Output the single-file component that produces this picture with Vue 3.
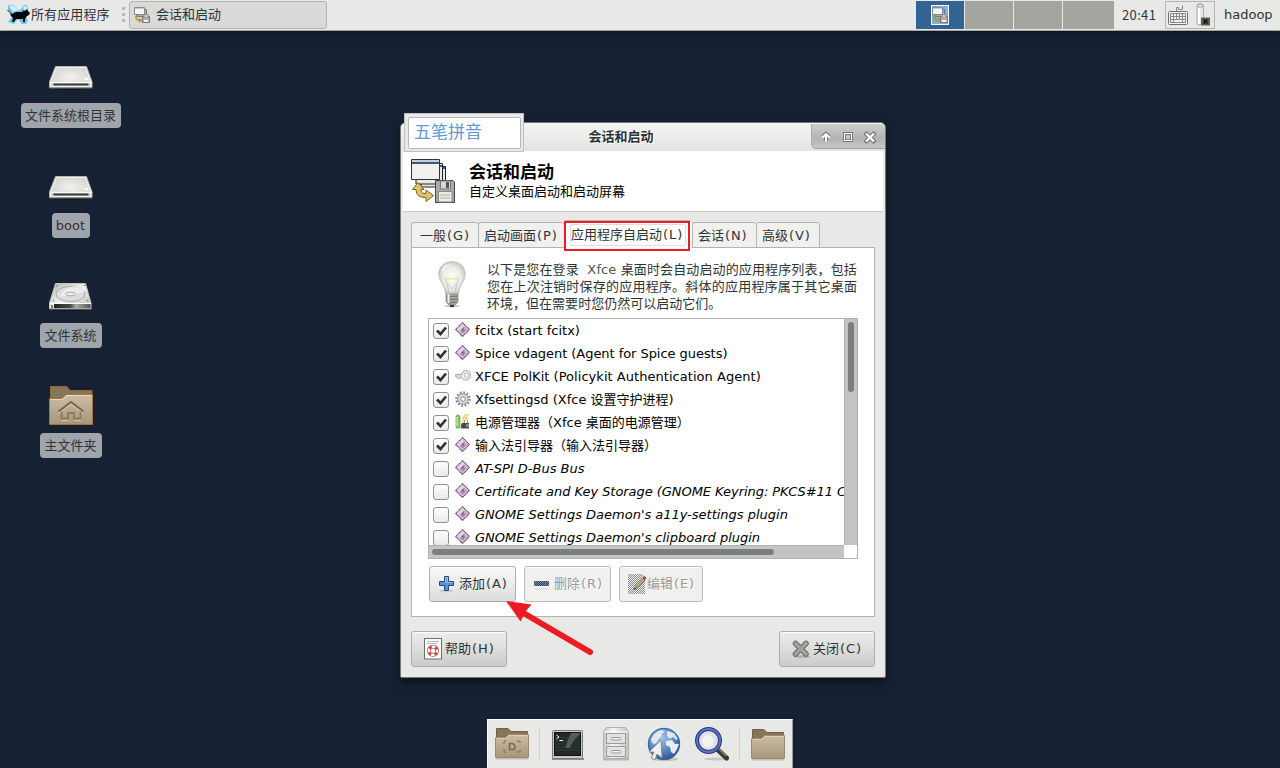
<script setup>
const desktopItems = [
  { icon: 'drive', label: '文件系统根目录' },
  { icon: 'drive', label: 'boot', latin: true },
  { icon: 'disk', label: '文件系统' },
  { icon: 'home', label: '主文件夹' },
]

const tabs = [
  { name: '一般', key: '(G)', cls: 't1' },
  { name: '启动画面', key: '(P)', cls: 't2' },
  { name: '应用程序自启动', key: '(L)', cls: 't3 active' },
  { name: '会话', key: '(N)', cls: 't4' },
  { name: '高级', key: '(V)', cls: 't5' },
]

const entries = [
  { on: true, icon: 'launcher', text: 'fcitx (start fcitx)' },
  { on: true, icon: 'launcher', text: 'Spice vdagent (Agent for Spice guests)', cls: 'tight' },
  { on: true, icon: 'key', text: 'XFCE PolKit (Policykit Authentication Agent)', cls: 'loose' },
  { on: true, icon: 'gear', text: 'Xfsettingsd (Xfce 设置守护进程)' },
  { on: true, icon: 'power', text: '电源管理器（Xfce 桌面的电源管理）' },
  { on: true, icon: 'launcher', text: '输入法引导器（输入法引导器）' },
  { on: false, icon: 'launcher', text: 'AT-SPI D-Bus Bus' },
  { on: false, icon: 'launcher', text: 'Certificate and Key Storage (GNOME Keyring: PKCS#11 C', cls: 'tight' },
  { on: false, icon: 'launcher', text: "GNOME Settings Daemon's a11y-settings plugin" },
  { on: false, icon: 'launcher', text: "GNOME Settings Daemon's clipboard plugin" },
]
</script>

<template>
  <div class="desktop">
    <svg class="defs" width="0" height="0">
      <defs>
        <linearGradient id="gFolder" x1="0" y1="0" x2="0" y2="1">
          <stop offset="0" stop-color="#cbbda6" /><stop offset="1" stop-color="#a8967a" />
        </linearGradient>
        <radialGradient id="gMetal" cx=".5" cy=".5" r=".6">
          <stop offset="0" stop-color="#f2f2f1" /><stop offset="1" stop-color="#cfcfcc" />
        </radialGradient>
        <linearGradient id="gDisk" x1="0" y1="0" x2="1" y2="1">
          <stop offset="0" stop-color="#b5b6b5" /><stop offset=".5" stop-color="#f0f0f0" /><stop offset="1" stop-color="#b9bab9" />
        </linearGradient>
        <linearGradient id="gFront" x1="0" y1="0" x2="1" y2="0">
          <stop offset="0" stop-color="#222" /><stop offset=".45" stop-color="#4a4a4a" /><stop offset=".6" stop-color="#aaa" /><stop offset="1" stop-color="#555" />
        </linearGradient>
        <linearGradient id="gCabinet" x1="0" y1="0" x2="1" y2="0">
          <stop offset="0" stop-color="#c9cac7" /><stop offset=".4" stop-color="#f4f4f2" /><stop offset="1" stop-color="#c4c5c1" />
        </linearGradient>
        <radialGradient id="gGlobe" cx=".4" cy=".3" r=".8">
          <stop offset="0" stop-color="#a9c6e8" /><stop offset=".55" stop-color="#5584bd" /><stop offset="1" stop-color="#204a87" />
        </radialGradient>
        <linearGradient id="gApp" x1="0" y1="0" x2="1" y2="1">
          <stop offset="0" stop-color="#efe6f0" /><stop offset="1" stop-color="#a57fae" />
        </linearGradient>
        <radialGradient id="gBulb">
          <stop offset="0" stop-color="#fdfdf8" /><stop offset=".65" stop-color="#ededeb" /><stop offset="1" stop-color="#cbcbc8" />
        </radialGradient>
        <pattern id="pDots" width="2" height="2" patternUnits="userSpaceOnUse">
          <rect width="1" height="1" fill="#8c8e8c" /><rect x="1" y="1" width="1" height="1" fill="#8c8e8c" />
        </pattern>
        <pattern id="pBlue" width="2" height="2" patternUnits="userSpaceOnUse">
          <rect width="2" height="2" fill="#7d8895" /><rect width="1" height="1" fill="#2f4260" /><rect x="1" y="1" width="1" height="1" fill="#2f4260" />
        </pattern>
        <symbol id="session" viewBox="0 0 44 44">
          <path d="M10 7.500H34.500V28H10Z" fill="#e8e8e7" stroke="#222" />
          <path d="M5 4.500H31.500V25H5Z" fill="#e8e8e7" stroke="#222" />
          <path d="M.500 .500H28.500V20.500H.500Z" fill="#f0f0ef" stroke="#333" />
          <path d="M1 1H28V3H1Z" fill="#c9cdd2" /><path d="M1 3H28V5H1Z" fill="#38587c" /><path d="M29 6H31V8H29ZM32 8H34V10H32Z" fill="#38587c" />
          <path d="M7 23.500L1.500 30.500H5Q5 39 15 38.500V42.500L22.500 36.500L15 31V34.500Q10 35 10 30.500H13Z" fill="#dfc36d" stroke="#79641f" />
          <path d="M24.500 21.500H42L43.500 23V43.500H24.500Z" fill="#a8a9a8" stroke="#444" />
          <path d="M29.500 22H39.500V30H29.500Z" fill="#d6d6d5" stroke="#777" />
          <path d="M35 23H38V29H35Z" fill="#555" /><path d="M27.500 32.500H41V43H27.500Z" fill="#ececeb" stroke="#888" />
          <path d="M29 36H39M29 39H39" stroke="#aaa" />
        </symbol>
        <symbol id="sessionSmall" viewBox="0 0 16 16">
          <path d="M2.500 2.500H12.500V9.500H2.500Z" fill="#aaa" stroke="#777" />
          <path d="M.500 .500H10.500V7.500H.500Z" fill="#f4f4f3" stroke="#888" /><path d="M1 1.500H10" stroke="#c3ccd6" />
          <path d="M2 9L2 11Q3 13.500 6 13.500M5 11.500L7.500 13.500L5 15" fill="none" stroke="#b79738" stroke-width="1.600" />
          <path d="M8.500 9.500H15.500V15.500H8.500Z" fill="#b5b5b4" stroke="#777" /><path d="M10 7.500H14V11H10Z" fill="#ccc" stroke="#888" stroke-width=".8" /><path d="M10 13H14V15H10Z" fill="#eee" />
        </symbol>
        <symbol id="drive" viewBox="0 0 48 48">
          <ellipse cx="24" cy="33" rx="22" ry="2" fill="#0b1119" opacity=".6" />
          <path d="M8.500 11.500H39.500L45 27V32.500H2.500V27Z" fill="url(#gMetal)" stroke="#b4b5ab" />
          <path d="M9.500 12.500H38.500L44 26.500V31.500H3.500V26.500Z" fill="none" stroke="#fafaf9" stroke-width=".8" />
          <path d="M3 27.300H45" stroke="#fff" /><path d="M6.500 29.500H41.500" stroke="#3a3a3a" stroke-width="1.800" />
          <path d="M2.500 33H45.500" stroke="#77776e" /><ellipse cx="39.500" cy="24" rx="2.500" ry="1.300" fill="#f8f8f8" />
        </symbol>
        <symbol id="disk" viewBox="0 0 48 48">
          <ellipse cx="24" cy="34" rx="21" ry="2" fill="#0b1119" opacity=".6" />
          <path d="M8.500 8.500H38.500L44 28V33.500H2.500V28Z" fill="url(#gDisk)" stroke="#c4c5c1" />
          <path d="M3 28.500H44" stroke="#fff" /><path d="M7 29H43.500V33H7Z" fill="url(#gFront)" /><path d="M4 30H6V33H4Z" fill="#777" />
          <path d="M2.500 34H44.500" stroke="#8a8a86" />
          <ellipse cx="23.500" cy="19" rx="14.500" ry="7.500" fill="#dcdddc" stroke="#9a9b9a" stroke-width=".8" />
          <path d="M13 22Q16 12 31 11Q38 14 37 17Z" fill="#f4f4f4" opacity=".7" /><ellipse cx="23.500" cy="19" rx="5" ry="1.800" fill="#eee" stroke="#aaa" />
          <circle cx="9.500" cy="11" r=".8" fill="#777" /><circle cx="37.500" cy="10.500" r=".8" fill="#777" /><circle cx="40.500" cy="25.500" r=".8" fill="#777" /><circle cx="6.500" cy="25.500" r=".8" fill="#777" />
        </symbol>
        <symbol id="home" viewBox="0 0 48 48">
          <path d="M3.500 39V1.500H20L23 5.500H45V12H42V38Z" fill="#86745b" stroke="#96662a" />
          <path d="M2.500 13.500H15L19 9.500H45.500V39.500H2.500Z" fill="url(#gFolder)" stroke="#a87434" />
          <path d="M3.500 14.500H15.500L19.500 10.500H44.500" fill="none" stroke="#e3dac9" />
          <path d="M11.500 26.500L24 17L36.500 26.500" fill="none" stroke="#78664b" stroke-width="2" />
          <path d="M14.500 26V33.500H21V28H27V33.500H33.500V26" fill="none" stroke="#8d7a5c" stroke-width="1.800" />
          <path d="M14 35.500H21M27 35.500H34M11.500 28.500L24 19L36.500 28.500" fill="none" stroke="#ddd2bd" stroke-width=".8" />
        </symbol>
        <symbol id="folder" viewBox="0 0 34 34">
          <path d="M1 32.500H33" stroke="#99958d" stroke-width="2" opacity=".5" />
          <path d="M1.500 30V2.500H13L16 5.500H32.500V12Z" fill="#86745b" stroke="#73603f" />
          <path d="M.500 11.500H10.500L13.500 8.500H33.500V31.500H.500Z" fill="url(#gFolder)" stroke="#a08a6b" />
          <path d="M1.500 12.500H11L14 9.500H32.500" fill="none" stroke="#d9cfbd" />
        </symbol>
        <symbol id="launcher" viewBox="0 0 16 16">
          <path d="M7.500 .700L14.500 7.500L7.500 14.500L.700 7.500Z" fill="url(#gApp)" stroke="#664070" stroke-width="1.100" stroke-dasharray="1.500 .500" />
          <path d="M7.500 2.200L13 7.500L7.500 13L2.200 7.500Z" fill="none" stroke="#e6dae8" stroke-width=".8" />
          <path d="M4 7L7.500 3.500L9 5L5.500 8.500Z" fill="#f4edf5" opacity=".7" /><path d="M5.500 10L9.500 5M8 5.500V10.500M6 7L10 8.500" stroke="#7d5389" stroke-width=".8" />
        </symbol>
        <symbol id="key" viewBox="0 0 16 16">
          <path d="M10.500 2.500C14 2.500 15.500 4.500 15.500 7S14 12 11 12C8.500 12 7.500 11 7 9.500L3 10.500L.700 8.500V6.500H7C7 4 8.500 2.500 10.500 2.500Z" fill="#eee" stroke="#a5a5a5" />
          <ellipse cx="11.500" cy="7.200" rx="2" ry="2.200" fill="#fff" stroke="#b5b5b5" /><path d="M1 8H7" stroke="#aaa" stroke-width=".7" />
        </symbol>
        <symbol id="gear" viewBox="0 0 16 16">
          <circle cx="8" cy="8" r="6.600" fill="none" stroke="#858585" stroke-width="2.200" stroke-dasharray="1.730 1.730" />
          <circle cx="8" cy="8" r="5.200" fill="#dedede" stroke="#888" stroke-width=".9" />
          <circle cx="8" cy="8" r="2.300" fill="#fff" stroke="#888" />
        </symbol>
        <symbol id="power" viewBox="0 0 16 16">
          <path d="M2 1H4V2H5V14H1V2H2Z" fill="#8bc66a" stroke="#63a33e" stroke-width=".7" />
          <path d="M2 3V12" stroke="#d2efc0" /><path d="M10 0L7 5H9L7 9L13 4H11L14 0Z" fill="#f7dd91" stroke="#e9bd5a" stroke-width=".5" />
          <path d="M7 9H14V14.500H6V11Z" fill="#444b4b" /><path d="M9 6H10V9H9ZM12 6H13V9H12Z" fill="#999" /><path d="M11 10H14V13H11Z" fill="#888" />
        </symbol>
      </defs>
    </svg>

    <header class="panel">
      <div class="menu">
        <svg class="mouse" width="24" height="20" viewBox="0 0 24 20">
          <path d="M1 .500L7 0L12 6L17 0H20L21 5L16 10L21 15L19 19H15L11 14L7 19L1 17L7 10L1 5Z" fill="#6cc3e8" />
          <path d="M2 1L7 .500L11 5L6 7ZM16 2L19 .500L20 4L17 6Z" fill="#d3effa" />
          <path d="M5 9L9 7H15L17 5L18 6L20 4L21 6L23 8L22 10L20 11L18 14V17H16V14H9L7 17H5L6 13L4 11L3 8L0 5L1 5L4 8Z" fill="#020202" />
        </svg>
        <span>所有应用程序</span>
      </div>
      <i class="grip"></i>
      <div class="task">
        <svg width="16" height="16"><use href="#sessionSmall" /></svg>
        <span>会话和启动</span>
      </div>
      <div class="pager">
        <i class="ws current"><b><svg width="16" height="18"><use href="#sessionSmall" /></svg></b></i><i class="ws"></i><i class="ws"></i><i class="ws last"></i>
      </div>
      <span class="clock">20:41</span>
      <div class="tray">
        <svg width="20" height="20" viewBox="0 0 20 20" fill="none" stroke="#6f6f6f">
          <path d="M8.500 6V2.500H10.500V4.500H14.500V.500" stroke="#888" />
          <rect x=".500" y="6.500" width="19" height="13" rx="1" fill="#f2f2f1" />
          <path d="M2.500 8.500H17.500V17.500H2.500ZM2.500 11.500H17.500M2.500 14.500H17.500M5.500 8.500V17.500M8.500 8.500V14.500M11.500 8.500V14.500M14.500 8.500V17.500" stroke="#888" />
        </svg>
        <svg width="14" height="23" viewBox="0 0 14 23">
          <path d="M1 3Q1 .500 4 .500T7.500 3V20Q7.500 22 4 22T1 20Z" fill="#e8e8e7" stroke="#aaa" /><path d="M3 2V21" stroke="#fff" stroke-width="2" />
          <ellipse cx="4.200" cy="3" rx="3" ry="1.300" fill="#eee" stroke="#aaa" />
          <rect x="5" y="14.500" width="9" height="8" fill="#5b6057" /><path d="M7.500 16.500L11.500 20.500M11.500 16.500L7.500 20.500" stroke="#1c1f1a" stroke-width="1.800" />
        </svg>
      </div>
      <span class="user">hadoop</span>
    </header>

    <ul class="icons">
      <li v-for="(d, i) in desktopItems" :key="i">
        <svg width="48" height="48"><use :href="'#' + d.icon" /></svg>
        <span :class="{ latin: d.latin }">{{ d.label }}</span>
      </li>
    </ul>

    <section class="window">
      <div class="titlebar">
        <h1>会话和启动</h1>
        <div class="controls">
          <svg width="73" height="24" viewBox="0 0 73 24">
            <g fill="none" stroke="#777" stroke-width="4.400" stroke-linejoin="round"><path d="M14 17V11M11 13L14 10L17 13" /><path d="M54.500 10L61.500 17M61.500 10L54.500 17" stroke-linecap="square" /></g>
            <g fill="none" stroke="#fff" stroke-width="2"><path d="M14 17.500V11M10.200 13.800L14 10.200L17.800 13.800" /><path d="M54 9.500L62 17.500M62 9.500L54 17.500" stroke-width="2.400" /></g>
            <rect x="31.500" y="8.500" width="9" height="9" fill="#fff" stroke="#777" /><rect x="33.500" y="10.500" width="5" height="5" fill="#c5c5c3" stroke="#777" />
          </svg>
        </div>
      </div>
      <div class="heading">
        <svg width="44" height="44"><use href="#session" /></svg>
        <div><h2>会话和启动</h2><p>自定义桌面启动和启动屏幕</p></div>
      </div>
      <div class="body">
        <nav class="tabs">
          <div v-for="t in tabs" :key="t.key" class="tab" :class="t.cls"><span>{{ t.name }}<em>{{ t.key }}</em></span></div>
        </nav>
        <div class="page">
          <div class="intro">
            <svg width="28" height="47" viewBox="0 0 28 47">
              <ellipse cx="14" cy="45" rx="8" ry="1.500" fill="#bbb" opacity=".7" />
              <path d="M14 .700C6 .700 .800 6 .800 13C.800 20 7 24 7.500 33H20.500C21 24 27.200 20 27.200 13C27.200 6 22 .700 14 .700Z" fill="url(#gBulb)" stroke="#c0c0bc" />
              <path d="M11.500 33L7.500 17M16.500 33L20.500 17M10 23L14 28L18 23" fill="none" stroke="#c0c0ba" stroke-width=".9" />
              <path d="M7 16.500Q10 18.500 14 18T20.500 16.500" fill="none" stroke="#f2e386" stroke-width="1.400" />
              <path d="M5 13Q5 5 13 3Q6 3 4 9Z" fill="#fff" />
              <path d="M8 33H20V41L17 44H11L8 41Z" fill="#a5a5a1" stroke="#888" stroke-width=".7" /><path d="M8 36L20 35M8 39L20 38M9 42L19 41" stroke="#777" /><path d="M10.500 33V42" stroke="#eee" stroke-width="2" />
              <path d="M12 44H16V46H12Z" fill="#333" />
            </svg>
            <p><span class="l1">以下是您在登录&nbsp; <em>Xfce</em> 桌面时会自动启动的应用程序列表，包括</span><span class="l2">您在上次注销时保存的应用程序。斜体的应用程序属于其它桌面</span><span class="l3">环境，但在需要时您仍然可以启动它们。</span></p>
          </div>
          <div class="list">
            <div class="rows">
              <div v-for="(e, i) in entries" :key="i" class="row" :class="{ off: !e.on }">
                <i class="check"><svg v-if="e.on" width="14" height="14" viewBox="0 0 14 14"><path d="M3 6.500L6.500 10L12 3.500" fill="none" stroke="#2e3436" stroke-width="2.700" /></svg></i>
                <svg class="ico" width="16" height="16"><use :href="'#' + e.icon" /></svg>
                <span :class="e.cls">{{ e.text }}</span>
              </div>
            </div>
            <div class="vbar"><i></i></div>
            <div class="hbar"><i></i></div>
            <div class="corner"></div>
          </div>
          <div class="actions">
            <button class="add">
              <svg width="18" height="18" viewBox="0 0 18 18"><ellipse cx="8.500" cy="16" rx="7" ry="1.500" fill="#bbb" opacity=".6" /><path d="M6.500 1.500H10.500V6.500H15.500V10.500H10.500V15.500H6.500V10.500H1.500V6.500H6.500Z" fill="#5d90ce" stroke="#204a87" /><path d="M7.500 8V2.500H9.500V7.500H14.500" fill="none" stroke="#a4c3e8" /></svg>
              <span>添加<em>(A)</em></span>
            </button>
            <button class="off del">
              <svg width="18" height="20" viewBox="0 0 18 20"><rect x="1" y="7" width="15" height="5" rx="1" fill="url(#pBlue)" /><rect x="2" y="14" width="13" height="2" fill="url(#pDots)" opacity=".3" /></svg>
              <span>删除<em>(R)</em></span>
            </button>
            <button class="off edit">
              <svg width="20" height="20" viewBox="0 0 20 20"><path d="M1 0H15L18 4V20H1Z" fill="#ededec" /><path d="M1 0H15L18 4V20H1Z" fill="url(#pDots)" /><path d="M7 15.500L8.500 12L16 4.500L18 6L10 14Z" fill="#cbab7b" stroke="#6d604c" stroke-width=".8" /><path d="M15.500 4L17.500 2L19.500 4L18 6Z" fill="#9c4654" /><path d="M6.500 16L7.500 14L9 15Z" fill="#333" /></svg>
              <span>编辑<em>(E)</em></span>
            </button>
          </div>
        </div>
        <footer class="bottom">
          <button class="help">
            <svg width="18" height="22" viewBox="0 0 18 22"><rect x=".500" y=".500" width="17" height="20.500" fill="#fafafa" stroke="#6e706d" /><path d="M3 3.500H15M3 5.500H13" stroke="#bbb" /><circle cx="9" cy="12.800" r="4.200" fill="none" stroke="#b06a6a" stroke-width="3.800" /><circle cx="9" cy="12.800" r="4.200" fill="none" stroke="#fff" stroke-width="2.400" /><circle cx="9" cy="12.800" r="4.200" fill="none" stroke="#d94141" stroke-width="2.800" stroke-dasharray="3 3.597" stroke-dashoffset="-1.800" /></svg>
            <span>帮助<em>(H)</em></span>
          </button>
          <button class="close">
            <svg width="18" height="18" viewBox="0 0 18 18"><ellipse cx="10" cy="16.500" rx="8" ry="1.300" fill="#aaa" /><path d="M3.500 3.500L14 14M14 3.500L3.500 14" stroke="#666864" stroke-width="5.500" stroke-linecap="round" /><path d="M3.500 3.500L14 14M14 3.500L3.500 14" stroke="#a0a29f" stroke-width="3.700" stroke-linecap="round" /></svg>
            <span>关闭<em>(C)</em></span>
          </button>
        </footer>
      </div>
    </section>

    <div class="ime"><div>五笔拼音</div></div>
    <i class="mark"></i>
    <svg class="arrow" width="92" height="60" viewBox="0 0 92 60"><path d="M18 12L88 53" stroke="#ed1c24" stroke-width="6" stroke-linecap="round" /><path d="M4 2L29.500 5.500L24 12L18.500 22.500Z" fill="#ed1c24" /></svg>

    <nav class="dock">
      <svg width="34" height="34" viewBox="0 0 34 34"><use href="#folder" y="-1" /><path d="M9 17V14H12M22 14H25V17M9 22V25H12M22 25H25V22" fill="none" stroke="#8b795d" stroke-width="1.500" stroke-dasharray="2 1" /><path d="M14.500 16.500H17Q20 17 20 20T17 22.500H14.500Z" fill="none" stroke="#7b6b51" stroke-width="1.600" /></svg>
      <i></i>
      <svg width="34" height="34" viewBox="0 0 34 34"><path d="M1 32H33" stroke="#777" stroke-width="2" opacity=".8" /><rect x="1.500" y="3.500" width="30" height="28" rx="1" fill="#c9cac7" stroke="#777975" /><rect x="3.500" y="5.500" width="26" height="23" fill="#202928" stroke="#111" /><path d="M20 6H29V7Q22 13 19 21H14Q17 12 20 6Z" fill="#8b9794" opacity=".5" /><path d="M4 11H29M4 14H29M4 17H29M4 20H29M4 23H29" stroke="#455350" opacity=".5" /><path d="M5.500 8L8 10L5.500 12M8.500 13.500H12" fill="none" stroke="#fff" /></svg>
      <svg width="34" height="34" viewBox="0 0 34 34"><path d="M4 32.500H30" stroke="#888" stroke-width="2" opacity=".5" /><path d="M7.500 .500H26.500L29.500 4.500V31.500H4.500V4.500Z" fill="url(#gCabinet)" stroke="#b0b1ad" /><path d="M5 5H29" stroke="#fff" /><g fill="#e2e2e0" stroke="#9c9d9a"><rect x="7.500" y="6.500" width="19" height="10" /><rect x="7.500" y="19.500" width="19" height="10" /></g><g fill="#f5f5f3" stroke="#969794"><rect x="12.500" y="10.500" width="9" height="2.500" rx="1.200" /><rect x="12.500" y="23.500" width="9" height="2.500" rx="1.200" /></g></svg>
      <svg width="34" height="34" viewBox="0 0 34 34"><ellipse cx="18" cy="32" rx="13" ry="2" fill="#888" opacity=".4" /><circle cx="17" cy="17" r="15.800" fill="url(#gGlobe)" stroke="#315c94" /><path d="M4 12Q8 4 15 3L18 5L14 7L15 9L12 11L10 15L8 17L5 16ZM20 4L27 6L31 12L29 13L26 10L23 12L20 9Z" fill="#eaf0f5" opacity=".9" /><path d="M19 14L25 13L28 17H32L30 22L27 27L24 25L23 20L19 18Z" fill="#f2f5f8" opacity=".92" /><path d="M14 13L2 25L7 25L4 31L8 33L10 27L15 31Z" fill="#efefee" stroke="#8b8d92" /></svg>
      <svg width="34" height="34" viewBox="0 0 34 34"><ellipse cx="21" cy="32" rx="12" ry="1.500" fill="#999" opacity=".4" /><path d="M22 22L31.500 31" stroke="#3e352b" stroke-width="5" stroke-linecap="round" /><path d="M23 21L31 29" stroke="#8d8171" stroke-width="1.500" /><circle cx="13.500" cy="13.500" r="11.500" fill="#dfe1e3" stroke="#28388b" stroke-width="4" /><circle cx="13.500" cy="13.500" r="11.500" fill="none" stroke="#6172bf" stroke-width="1.800" /><ellipse cx="13" cy="14" rx="6" ry="6" fill="#f2f2f1" /></svg>
      <i></i>
      <svg width="34" height="34" viewBox="0 0 34 34"><use href="#folder" /></svg>
    </nav>
  </div>
</template>

<style>
html, body { margin: 0; overflow: hidden; background: #162233; }
</style>

<style scoped>
* { box-sizing: border-box; }
.desktop { position: relative; width: 1280px; height: 768px; overflow: hidden; background: #162233; color: #2e3436; font: 13px/17px "DejaVu Sans", "Noto Sans CJK SC", sans-serif; white-space: nowrap; }
.defs { position: absolute; }
svg { display: block; flex: none; }
em, i { font-style: normal; }
h1, h2, p, ul { margin: 0; padding: 0; }
.panel { display: flex; align-items: center; height: 31px; background: #e8e8e6; border-bottom: 1px solid #a5a69f; box-shadow: 0 2px 8px #0b131e; padding-bottom: 1px; }
.menu { display: flex; align-items: center; width: 121px; padding-left: 7px; letter-spacing: .1px; }
.grip { width: 4px; height: 15px; margin-right: 4px; background: linear-gradient(90deg, transparent 1px, #b8b8b6 1px); -webkit-mask: repeating-linear-gradient(#000 0 3px, transparent 3px 6px); }
.task { display: flex; align-items: center; gap: 6px; width: 198px; height: 28px; padding-left: 4px; border: 1px solid #b2b2b0; border-radius: 3px; background: #d9d9d7; }
.pager { display: flex; gap: 1px; margin-left: 589px; height: 28px; }
.ws { width: 48px; background: #a4a59f; }
.ws.last { width: 51px; }
.ws.current { display: grid; place-items: center; background: #336393; }
.ws b { border: 1px solid #fff; background: #80afe0; }
.clock { width: 51px; padding-left: 8px; font: 13px "Noto Sans CJK SC"; letter-spacing: .35px; }
.tray { display: flex; gap: 8px; align-items: center; width: 50px; height: 28px; padding-left: 2px; border: 1px solid #b5b5b3; }
.user { margin-left: 9px; }
.icons { position: absolute; left: 21px; top: 55px; width: 100px; list-style: none; }
.icons li { display: flex; flex-direction: column; align-items: center; height: 110px; }
.icons span { height: 25px; padding: 0 5px 0 4px; line-height: 25px; border-radius: 4px; background: #a0a5ab; }
.window { position: absolute; left: 400px; top: 122px; width: 486px; height: 556px; border: 1px solid #777875; border-radius: 6px 6px 2px 2px; background: #e8e8e6; box-shadow: 0 4px 10px #0a111b; display: flex; flex-direction: column; }
.titlebar { position: relative; height: 28px; border-radius: 5px 5px 0 0; background: linear-gradient(#f4f4f3, #e4e4e2); }
h1 { width: 440px; padding-top: 5px; text-align: center; font: bold 13px/17px "DejaVu Sans", "Noto Sans CJK SC", sans-serif; text-shadow: 1px 1px #fff; }
.controls { position: absolute; right: 0; top: 1px; border-radius: 0 5px 0 5px; border-left: 1px solid #adadab; border-bottom: 1px solid #a0a09e; background: linear-gradient(#cfcfcd, #b3b3b1 60%, #c6c6c4); }
.heading { display: flex; height: 61px; margin: 0 2px; padding: 8px 8px 0; gap: 14px; background: #fff; border-bottom: 1px solid #cacac8; color: #000; }
h2 { font: bold 17px/23px "DejaVu Sans", "Noto Sans CJK SC", sans-serif; padding-top: 2px; }
.heading p { line-height: 16px; }
.body { display: flex; flex-direction: column; padding: 8px 10px 0; }
.tabs { display: flex; height: 28px; align-items: flex-end; position: relative; z-index: 1; }
.tab { height: 26px; border: 1px solid #b3b3b1; border-right: 0; background: #f0f0ee; padding: 4px 0 0 7px; border-radius: 3px 3px 0 0; }
.t1 { width: 67px; padding-left: 8px; } .t2 { width: 86px; padding-left: 5px; } .t3 { width: 128px; } .t4 { width: 64px; padding-left: 5px; } .t5 { width: 64px; padding-left: 5px; border-right: 1px solid #b3b3b1; }
.tab.active { height: 28px; background: #fff; border-bottom: 0; padding: 3px 0 0 5px; }
.active span { display: block; width: 116px; height: 22px; line-height: 20px; border: 1px solid #dededc; border-radius: 2px; }
.tab em, button em { letter-spacing: .9px; margin-left: 1px; }
.page { height: 370px; margin-top: -1px; padding: 13px 16px 0; background: #fff; border: 1px solid #b3b3b1; }
.intro { display: flex; height: 57px; padding-left: 10px; gap: 21px; }
.intro p span { display: block; height: 17px; }
.l1 { letter-spacing: .12px; } .l2 { letter-spacing: .22px; } .l3 { letter-spacing: .02px; }
.intro em { color: #555; }
.list { display: grid; grid-template: 226px 13px / 415px 13px; width: 430px; height: 241px; border: 1px solid #b0b1af; }
.rows { overflow: hidden; background: #fff; }
.row { display: flex; align-items: center; height: 23px; padding-left: 4px; color: #000; }
.row.off span { font-style: italic; }
.tight { letter-spacing: -.05px; } .loose { letter-spacing: .04px; }
.check { flex: none; width: 16px; height: 16px; margin: 1px 6px 0 0; border: 1px solid #8f918b; border-radius: 3px; background: linear-gradient(#fff, #e8e8e6); }
.ico { margin: 0 4px 2px 0; }
.vbar { background: #c3c5c4; border-left: 1px solid #b0b1af; padding: 3px 2px 0 3px; }
.vbar i { display: block; width: 6px; height: 70px; border-radius: 3px; background: #7b7f7f; }
.hbar { background: #c3c5c4; border-top: 1px solid #b0b1af; padding: 3px; }
.hbar i { display: block; width: 342px; height: 6px; border-radius: 3px; background: #7b7f7f; }
.corner { background: #fff; }
.actions { display: flex; gap: 8px; padding: 7px 0 0 1px; }
button { display: flex; align-items: center; width: 87px; height: 36px; padding: 0 0 0 8px; gap: 3px; border: 1px solid #adaeab; border-radius: 3px; background: linear-gradient(#f9f9f9, #ddd); color: #2e3436; font: inherit; box-shadow: inset 0 1px #fff; }
button span { margin-top: -2px; }
button.off { background: #f0f0ef; color: #989a99; border-color: #bcbdba; text-shadow: 1px 1px #fff; }
button.edit { width: 84px; gap: 0; padding-left: 7px; }
.bottom { display: flex; justify-content: space-between; padding-top: 14px; }
.bottom button { width: 96px; padding-left: 12px; background: linear-gradient(#ededec, #ccccca); }
.ime { position: absolute; left: 404px; top: 113px; width: 120px; height: 39px; padding: 3px; border: 1px solid #bfc0bf; background: #e8e8e8; }
.ime div { width: 113px; height: 32px; padding-left: 5px; border: 1px solid #b7b7b7; border-radius: 2px; background: #fff; color: #629ad5; font-size: 17px; line-height: 29px; }
.mark { position: absolute; left: 564px; top: 221px; width: 126px; height: 30px; border: 2px solid #ed1c24; z-index: 2; }
.arrow { position: absolute; left: 502px; top: 599px; }
.dock { position: absolute; left: 487px; top: 719px; width: 306px; height: 49px; display: flex; gap: 14px; padding: 7px 0 0 7px; background: #e8e8e6; border: 1px solid #fff; border-right-color: #999; border-bottom: 0; }
.dock i { width: 1px; height: 34px; margin: 0 -3px 0 -4px; background: #cfcfcd; }
</style>
